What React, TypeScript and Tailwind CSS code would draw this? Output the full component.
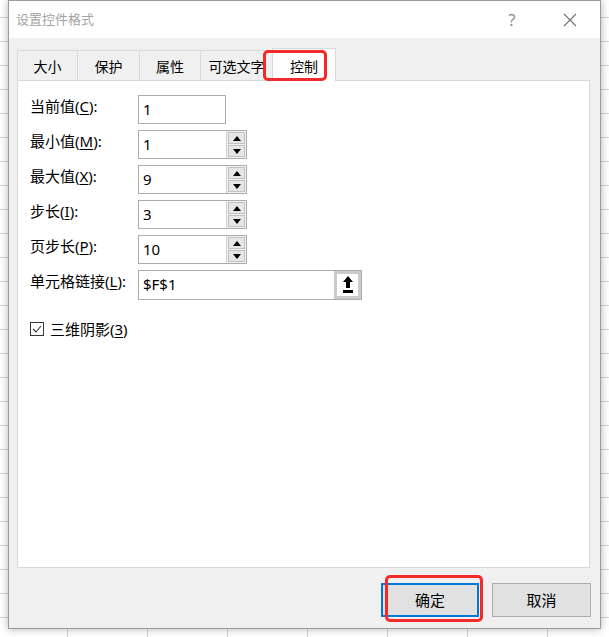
import type { ReactNode } from "react";

function Label({ text, hot }: { text: string; hot: string }) {
  return (
    <div className="w-[108px] shrink-0 pb-[6px]">
      {text}(<span className="underline underline-offset-2">{hot}</span>):
    </div>
  );
}

function Arrow({ up }: { up?: boolean }) {
  return (
    <svg width="8" height="5" viewBox="0 0 8 5">
      {up ? <polygon points="4,0 8,5 0,5" fill="#000" /> : <polygon points="0,0 8,0 4,5" fill="#000" />}
    </svg>
  );
}

function SpinInput({ value }: { value: string }) {
  return (
    <div className="flex h-[29px] w-[109px] border border-[#acacac] bg-white">
      <div className="flex flex-1 items-center pl-[4px]">{value}</div>
      <div className="flex w-[20px] flex-col gap-px border-l border-[#d0d0d0] bg-[#f0f0f0] p-px">
        <div className="flex flex-1 items-center justify-center border border-[#c2c2c2] bg-[#e6e6e6]">
          <Arrow up />
        </div>
        <div className="flex flex-1 items-center justify-center border border-[#c2c2c2] bg-[#e6e6e6]">
          <Arrow />
        </div>
      </div>
    </div>
  );
}

function Row({ children }: { children: ReactNode }) {
  return <div className="flex h-[29px] items-center">{children}</div>;
}

const tabs = ["大小", "保护", "属性", "可选文字"];
const tabWidths = ["w-[60px]", "w-[62px]", "w-[61px]", "w-[72px]"];

export default function App() {
  return (
    <div className="relative h-[637px] w-[609px] overflow-hidden bg-white bg-[linear-gradient(to_right,#d4d4d4_1px,transparent_1px),linear-gradient(to_bottom,#d4d4d4_1px,transparent_1px)] bg-[size:80px_24px] bg-[position:67px_17px] font-['Noto_Sans','Noto_Sans_CJK_SC',sans-serif] text-[15px] text-black">
      <div className="absolute left-[8px] top-0 flex h-[629px] w-[593px] flex-col border border-[#9b9b9b] bg-[#f0f0f0] shadow-[0_0_8px_rgba(0,0,0,0.3)]">
        {/* title bar */}
        <div className="flex h-[37px] items-center bg-white pl-[7px]">
          <span className="text-[13px] text-[#a3a3a3]">设置控件格式</span>
          <div className="ml-auto mr-[7px] flex items-center gap-[12px]">
            <div className="flex w-[46px] justify-center text-[16px] text-[#8c8c8c]">?</div>
            <div className="flex w-[46px] justify-center">
              <svg width="14" height="14" viewBox="0 0 14 14">
                <path d="M1 1 L13 13 M13 1 L1 13" stroke="#707070" strokeWidth="1.1" />
              </svg>
            </div>
          </div>
        </div>

        {/* body */}
        <div className="flex flex-1 flex-col px-[8px]">
          <div className="mt-[10px] flex h-[32px] items-end">
            {tabs.map((t, i) => (
              <div
                key={t}
                className={`flex h-[30px] items-center justify-center border-l border-t border-[#d9d9d9] pt-[2px] text-[14px] ${tabWidths[i]}`}
              >
                {t}
              </div>
            ))}
            <div className="relative z-10 -mb-px flex h-[33px] w-[64px] items-center justify-center border-x border-t border-[#d9d9d9] bg-white pt-[2px] text-[14px]">
              控制
            </div>
          </div>

          <div className="flex h-[488px] w-[573px] flex-col border border-[#d9d9d9] bg-white pl-[12px] pt-[14px]">
            <div className="flex flex-col gap-[6px]">
              <Row>
                <Label text="当前值" hot="C" />
                <div className="flex h-[29px] w-[88px] items-center border border-[#acacac] pl-[4px]">1</div>
              </Row>
              <Row>
                <Label text="最小值" hot="M" />
                <SpinInput value="1" />
              </Row>
              <Row>
                <Label text="最大值" hot="X" />
                <SpinInput value="9" />
              </Row>
              <Row>
                <Label text="步长" hot="I" />
                <SpinInput value="3" />
              </Row>
              <Row>
                <Label text="页步长" hot="P" />
                <SpinInput value="10" />
              </Row>
              <Row>
                <Label text="单元格链接" hot="L" />
                <div className="flex h-[30px] w-[224px] border border-[#acacac]">
                  <div className="flex flex-1 items-center pl-[4px]">$F$1</div>
                  <div className="flex w-[27px] items-center justify-center border-[3px] border-[#cbcbcb] bg-white">
                    <svg width="12" height="18" viewBox="0 0 12 18">
                      <polygon points="6,0 11,6 8,6 8,12 4,12 4,6 1,6" fill="#000" />
                      <rect x="1" y="14" width="10" height="3" fill="#000" />
                    </svg>
                  </div>
                </div>
              </Row>
            </div>

            <div className="mt-[19px] flex items-center gap-[6px]">
              <div className="flex h-[14px] w-[14px] items-center justify-center border border-[#333]">
                <svg width="10" height="8" viewBox="0 0 10 8">
                  <path d="M1 4 L4 7 L9 1" stroke="#333" strokeWidth="1.1" fill="none" />
                </svg>
              </div>
              <span>
                三维阴影(<span className="underline underline-offset-2">3</span>)
              </span>
            </div>
          </div>

          <div className="mr-px mt-[15px] flex justify-end gap-[13px]">
            <div className="flex h-[34px] w-[98px] items-center justify-center border-2 border-[#0078d7] bg-[#e1e1e1]">
              确定
            </div>
            <div className="flex h-[34px] w-[99px] items-center justify-center border border-[#adadad] bg-[#e1e1e1]">
              取消
            </div>
          </div>
        </div>
      </div>

      {/* annotations */}
      <div className="absolute left-[263px] top-[50px] z-20 h-[31px] w-[64px] rounded-[5px] border-[3px] border-[#f32a2a]" />
      <div className="absolute left-[385px] top-[575px] z-20 h-[47px] w-[98px] rounded-[5px] border-[3px] border-[#f32a2a]" />
    </div>
  );
}
